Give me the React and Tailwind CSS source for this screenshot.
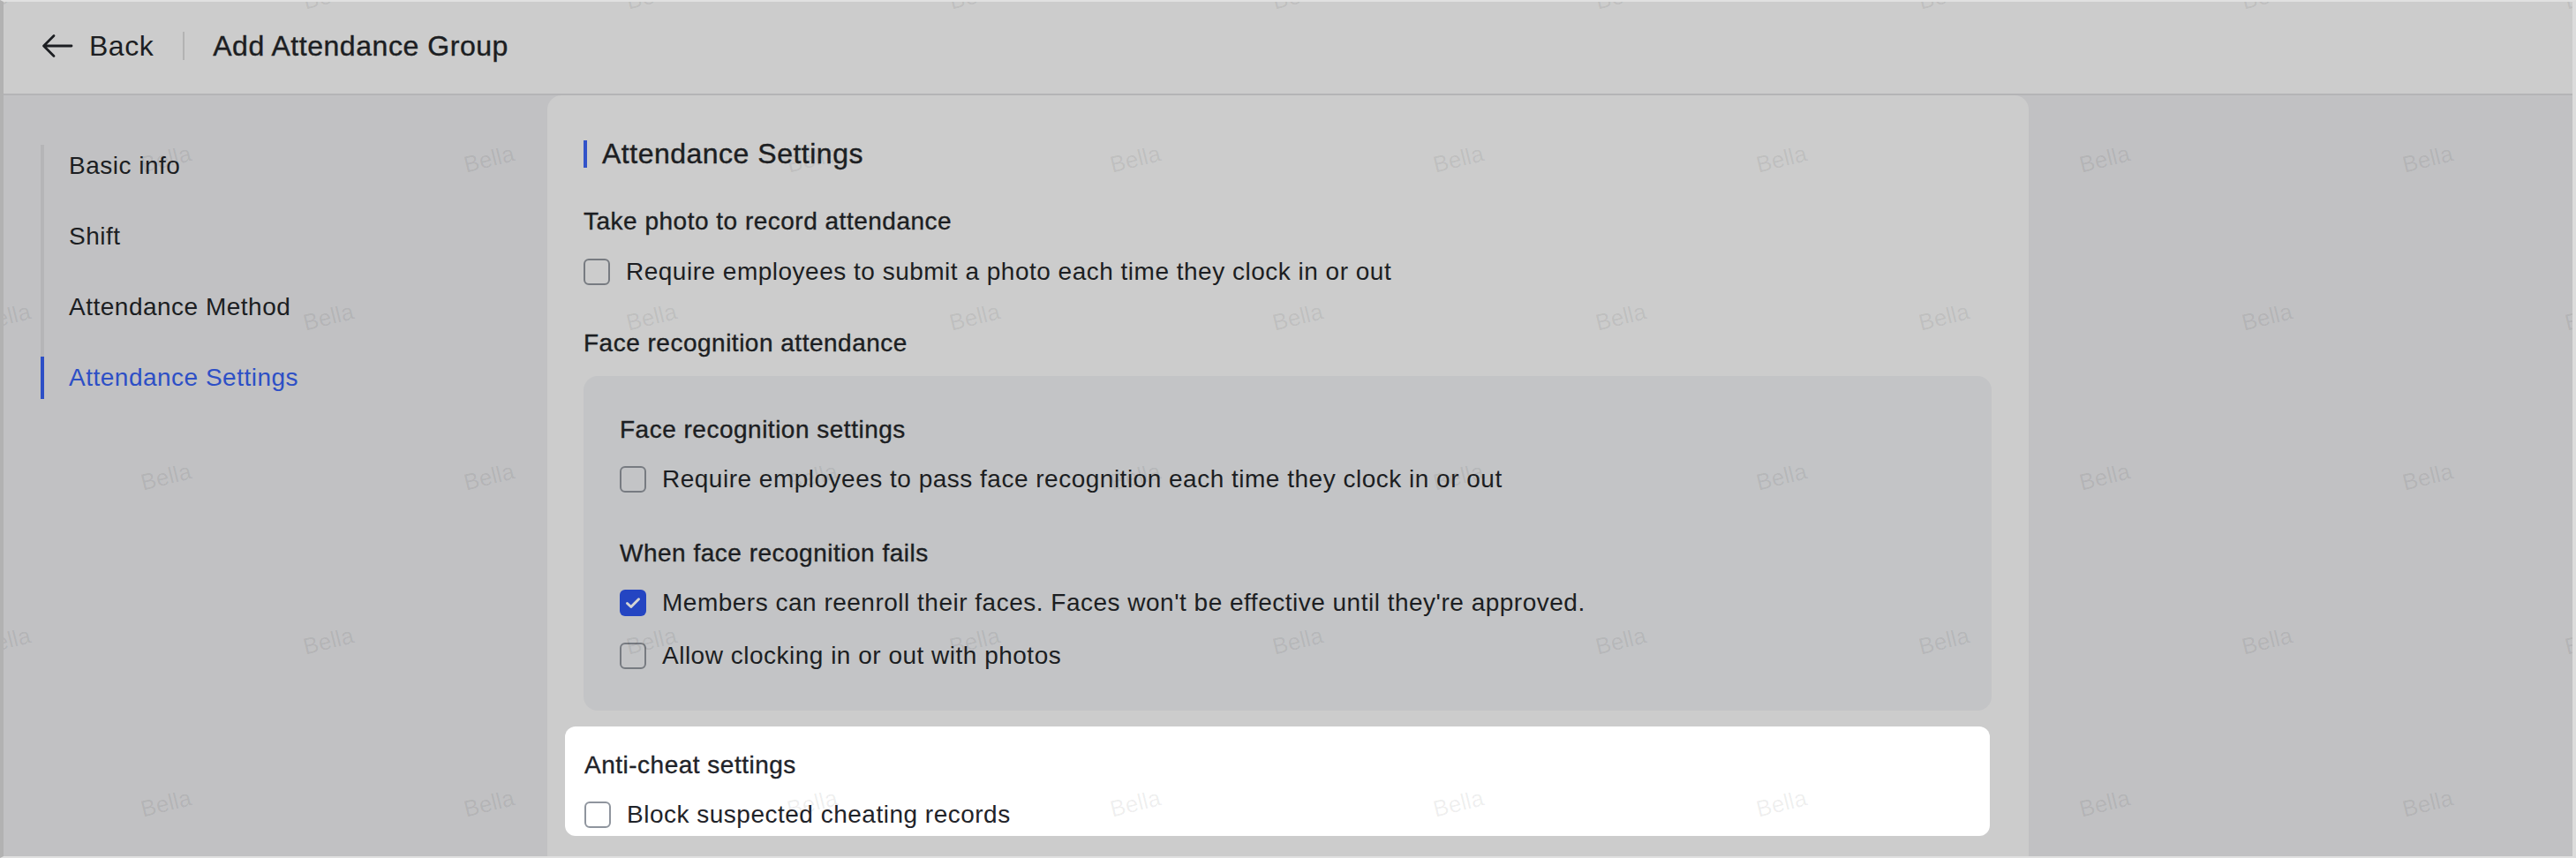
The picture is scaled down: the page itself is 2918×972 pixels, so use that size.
import React from "react";

const FONT = "font-['Liberation_Sans',Arial,sans-serif]";

function Checkbox({ checked = false, light = false }) {
  if (checked) {
    return (
      <span className="flex h-[30px] w-[30px] shrink-0 items-center justify-center rounded-[6px] bg-[#2445c2]">
        <svg width="18" height="14" viewBox="0 0 18 14" fill="none">
          <path
            d="M2.5 7.5L6.8 11.5L15.5 2.8"
            stroke="#d4d4d4"
            strokeWidth="3"
            strokeLinecap="round"
            strokeLinejoin="round"
          />
        </svg>
      </span>
    );
  }
  return (
    <span
      className={
        light
          ? "h-[30px] w-[30px] shrink-0 rounded-[6px] border-2 border-[#8f959e] bg-white"
          : "h-[30px] w-[30px] shrink-0 rounded-[6px] border-2 border-[#777b81]"
      }
    />
  );
}

function CheckRow({ checked, light, children, className = "" }) {
  return (
    <div className={"flex h-[40px] items-center gap-[18px] " + className}>
      <Checkbox checked={checked} light={light} />
      <span className="text-[28px] leading-[40px] tracking-[0.5px]">{children}</span>
    </div>
  );
}

function Label({ children, className = "" }) {
  return (
    <div
      className={
        "h-[40px] text-[28px] leading-[40px] tracking-[0.5px] [-webkit-text-stroke:0.35px_currentColor] " +
        className
      }
    >
      {children}
    </div>
  );
}

function Watermarks() {
  const rows = [-5, 180, 359, 540, 726, 910];
  const marks = [];
  rows.forEach((y, r) => {
    const start = r % 2 === 0 ? 6 : 188;
    for (let x = start; x < 2960; x += 366) {
      marks.push({ x, y, key: r + "-" + x });
    }
  });
  return (
    <div className="pointer-events-none absolute inset-0 overflow-hidden">
      {marks.map((m) => (
        <span
          key={m.key}
          className="absolute flex h-[30px] w-[64px] -rotate-[14deg] items-center justify-center text-[26px] leading-[30px] text-black/[0.07]"
          style={{ left: m.x - 4 - 32, top: m.y - 2 - 15 }}
        >
          Bella
        </span>
      ))}
    </div>
  );
}

export default function App() {
  return (
    <div
      className={
        "relative flex h-[972px] w-[2918px] flex-col overflow-hidden border-t-2 border-r-4 border-b-2 border-l-4 border-t-[#e0e0e0] border-r-[#dcdcdc] border-b-[#e0e0e0] border-l-[#b2b2b2] bg-[#c1c1c3] text-[#1c1e22] " +
        FONT
      }
    >
      {/* Header */}
      <header className="flex h-[106px] shrink-0 items-center border-b-2 border-[#b4b4b6] bg-[#cccccc] pb-[4px] pl-[43px]">
        <svg width="36" height="28" viewBox="0 0 36 28" fill="none" className="shrink-0">
          <path
            d="M34 14H3M14 2.5L2.5 14L14 25.5"
            stroke="#1c1e22"
            strokeWidth="2.8"
            strokeLinecap="round"
            strokeLinejoin="round"
          />
        </svg>
        <span className="ml-[18px] text-[32px] leading-[40px] tracking-[0.5px]">Back</span>
        <span className="ml-[33px] h-[32px] w-[2px] bg-[#b3b3b3]" />
        <span className="ml-[32px] text-[32px] leading-[40px] tracking-[0.55px] [-webkit-text-stroke:0.4px_currentColor]">
          Add Attendance Group
        </span>
      </header>

      {/* Main */}
      <div className="flex min-h-0 flex-1 bg-[#c1c1c3]">
        {/* Sidebar */}
        <aside className="w-[616px] shrink-0 bg-[#c1c1c3] pt-[56px]">
          <nav className="ml-[42px] flex flex-col gap-[32px] border-l-4 border-[#b5b5b7] text-[28px] tracking-[0.5px]">
            <div className="flex h-[48px] items-center pl-[28px]">Basic info</div>
            <div className="flex h-[48px] items-center pl-[28px]">Shift</div>
            <div className="flex h-[48px] items-center pl-[28px]">Attendance Method</div>
            <div className="-ml-[4px] flex h-[48px] items-center border-l-4 border-[#2d4fc6] pl-[28px] text-[#2d4fc6]">
              Attendance Settings
            </div>
          </nav>
        </aside>

        {/* Card */}
        <main className="flex-1 rounded-t-[16px] bg-[#cccccc] pt-[50px] pr-[42px] pl-[41px]">
          <div className="flex h-[32px] items-center gap-[17px]">
            <span className="h-[31px] w-[4px] bg-[#3253c9]" />
            <span className="text-[32px] leading-[32px] tracking-[0.5px] [-webkit-text-stroke:0.4px_currentColor]">
              Attendance Settings
            </span>
          </div>

          <Label className="mt-[41px]">Take photo to record attendance</Label>
          <CheckRow className="mt-[17px]">
            Require employees to submit a photo each time they clock in or out
          </CheckRow>

          <Label className="mt-[41px]">Face recognition attendance</Label>

          <div className="mt-[17px] rounded-[16px] bg-[#c3c4c6] pt-[41px] pb-[42px] pl-[41px]">
            <Label>Face recognition settings</Label>
            <CheckRow className="mt-[16px]">
              Require employees to pass face recognition each time they clock in or out
            </CheckRow>
            <Label className="mt-[44px]">When face recognition fails</Label>
            <CheckRow checked className="mt-[16px]">
              Members can reenroll their faces. Faces won't be effective until they're approved.
            </CheckRow>
            <CheckRow className="mt-[20px]">Allow clocking in or out with photos</CheckRow>
          </div>

          <div className="mt-[18px] -ml-[21px] mr-[2px] h-[124px] rounded-[12px] bg-white pt-[24px] pl-[22px] text-[#1f2329]">
            <Label>Anti-cheat settings</Label>
            <CheckRow light className="mt-[16px]">
              Block suspected cheating records
            </CheckRow>
          </div>
        </main>

        {/* Right area */}
        <div className="w-[616px] shrink-0 bg-[#c1c1c3]" />
      </div>

      <Watermarks />
    </div>
  );
}
